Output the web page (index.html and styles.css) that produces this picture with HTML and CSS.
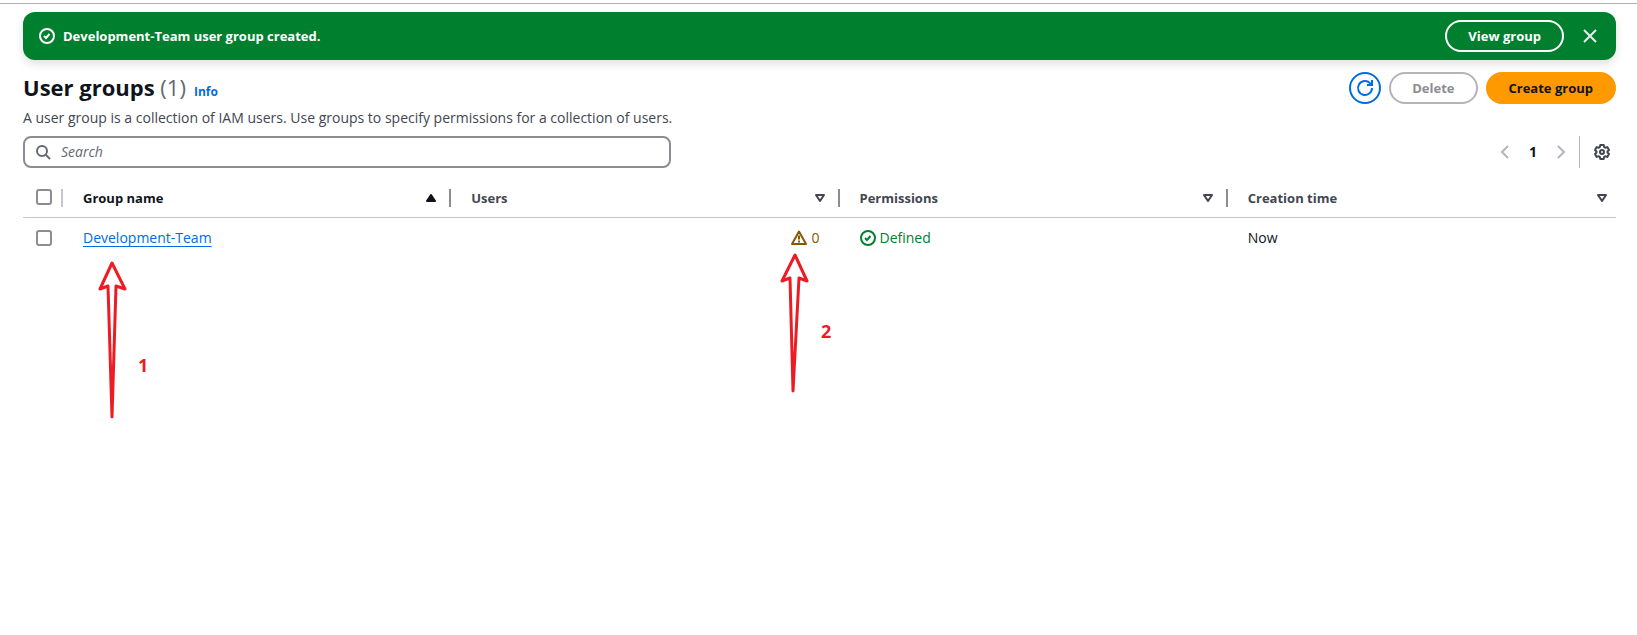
FILE: index.html
```html
<!DOCTYPE html>
<html lang="en">
<head>
<meta charset="utf-8">
<title>User groups</title>
<link rel="stylesheet" href="styles.css">
</head>
<body>
<main class="page">
  <div class="flash" role="status">
    <svg class="icon" viewBox="0 0 16 16"><circle cx="8" cy="8" r="7"/><path d="m5 8 2 2 3.5-4"/></svg>
    <p class="flash-text">Development-Team user group created.</p>
    <button class="btn btn-flash" type="button">View group</button>
    <button class="icon-btn" type="button" aria-label="Dismiss"><svg class="icon" viewBox="0 0 16 16"><path d="m2 2 12 12M14 2 2 14"/></svg></button>
  </div>

  <header class="header">
    <div class="heading">
      <h1 class="title">User groups <span class="count">(1)</span></h1>
      <a class="info" href="#info">Info</a>
    </div>
    <div class="actions">
      <button class="btn btn-refresh" type="button" aria-label="Refresh"><svg class="icon" viewBox="0 0 16 16"><path d="M15 8a7 7 0 1 1-2-4.900L15 5M10 5h5V0"/></svg></button>
      <button class="btn btn-disabled" type="button" disabled>Delete</button>
      <button class="btn btn-primary" type="button">Create group</button>
    </div>
  </header>
  <p class="description">A user group is a collection of IAM users. Use groups to specify permissions for a collection of users.</p>

  <div class="tools">
    <label class="search">
      <svg class="icon" viewBox="0 0 16 16"><circle cx="7" cy="7" r="5"/><path d="m15 15-4.500-4.500"/></svg>
      <input class="search-input" type="search" placeholder="Search" aria-label="Search">
    </label>
    <div class="tools-end">
      <nav class="pages" aria-label="Pagination">
        <button class="icon-btn arrow" type="button" aria-label="Previous page" disabled><svg class="icon" viewBox="0 0 16 16"><path d="M11 2 5 8l6 6"/></svg></button>
        <button class="icon-btn page-no" type="button">1</button>
        <button class="icon-btn arrow" type="button" aria-label="Next page" disabled><svg class="icon" viewBox="0 0 16 16"><path d="m5 2 6 6-6 6"/></svg></button>
      </nav>
      <div class="prefs">
        <button class="icon-btn" type="button" aria-label="Preferences"><svg class="icon" viewBox="0 0 16 16"><path stroke-linejoin="round" d="M6.300 1h3.400l.5 2.100 1 .6 2.100-.6L15 6l-1.500 1.500v1L15 10l-1.700 2.900-2.100-.6-1 .6-.5 2.100H6.300l-.5-2.100-1-.6-2.100.6L1 10l1.500-1.500v-1L1 6l1.700-2.900 2.100.6 1-.6z"/><circle cx="8" cy="8" r="2"/></svg></button>
      </div>
    </div>
  </div>

  <table class="table">
    <colgroup><col class="col-check"><col><col><col><col></colgroup>
    <thead>
      <tr>
        <th scope="col"><div class="check-head"><input class="check" type="checkbox" aria-label="Select all groups"></div></th>
        <th scope="col"><div class="head sorted">Group name<svg class="sort" viewBox="0 0 10 8"><path class="solid" d="M5 1 9 7H1z"/></svg></div></th>
        <th scope="col"><div class="head">Users<svg class="sort" viewBox="0 0 10 8"><path d="M1 1h8L5 7z"/></svg></div></th>
        <th scope="col"><div class="head">Permissions<svg class="sort" viewBox="0 0 10 8"><path d="M1 1h8L5 7z"/></svg></div></th>
        <th scope="col"><div class="head last">Creation time<svg class="sort" viewBox="0 0 10 8"><path d="M1 1h8L5 7z"/></svg></div></th>
      </tr>
    </thead>
    <tbody>
      <tr>
        <td class="cell-check"><input class="check" type="checkbox" aria-label="Select Development-Team"></td>
        <td><a class="link" href="#group">Development-Team</a></td>
        <td><span class="status warning"><svg class="icon" viewBox="0 0 16 16"><path stroke-linejoin="round" d="M8 1.500 15 14H1z"/><path d="M8 5.500v4M8 10.500v2"/></svg>0</span></td>
        <td><span class="status success"><svg class="icon" viewBox="0 0 16 16"><circle cx="8" cy="8" r="7"/><path d="m5 8 2 2 3.500-4"/></svg>Defined</span></td>
        <td>Now</td>
      </tr>
    </tbody>
  </table>
</main>

<div class="note note-one">
  <svg class="note-arrow" width="30" height="160" viewBox="0 0 30 160"><path d="m15 4 13 26-9-3-4 131-4-131-8 3z"/></svg>
  <span>1</span>
</div>
<div class="note note-two">
  <svg class="note-arrow" width="30" height="142" viewBox="0 0 30 142"><path d="m15 4 12 26-8-3-6 113-3-113-8 3z"/></svg>
  <span>2</span>
</div>
</body>
</html>
```
FILE: styles.css
```css
* { box-sizing: border-box; }

body {
  position: relative;
  min-height: 100vh;
  margin: 0;
  padding-top: 3px;
  background: #fff;
  color: #0f141a;
  font: 14px/20px "Open Sans", "Noto Sans", sans-serif;
}

h1, p { margin: 0; }
button, input { font: inherit; }

.page {
  padding: 8px 21px 0 23px;
  border-top: 1px solid #b0b0b0;
}

.icon {
  display: block;
  flex: none;
  width: 16px;
  height: 16px;
  overflow: visible;
  fill: none;
  stroke: currentColor;
  stroke-width: 2;
}

.flash {
  display: flex;
  align-items: center;
  height: 48px;
  padding: 0 16px;
  border-radius: 12px;
  background: #00802f;
  box-shadow: 0 4px 8px rgba(0, 7, 22, 0.12);
  color: #fff;
}

.flash-text {
  flex: 1;
  padding-left: 8px;
  font-size: 13px;
  font-weight: 700;
}

.btn {
  height: 32px;
  padding: 0 21px;
  border: 2px solid;
  border-radius: 16px;
  background: none;
  font-size: 13px;
  font-weight: 700;
  line-height: 20px;
  white-space: nowrap;
}

.btn-flash { margin-right: 16px; color: #fff; }

.icon-btn {
  padding: 0;
  border: 0;
  background: none;
  color: inherit;
}

.flash .icon-btn { padding: 2px; color: #ebebf0; }

.header {
  display: flex;
  justify-content: space-between;
  margin-top: 12px;
}

.heading {
  display: flex;
  align-items: baseline;
  gap: 8px;
}

.title {
  font-size: 22px;
  font-weight: 700;
  line-height: 30px;
}

.count { color: #656871; font-weight: 400; }

.info {
  color: #006ce0;
  font-size: 12px;
  font-weight: 700;
  text-decoration: none;
}

.actions { display: flex; gap: 8px; }
.btn-refresh { width: 32px; padding: 0 6px; color: #006ce0; }
.btn-disabled { border-color: #b4b4bb; color: #8c8c94; }
.btn-primary { border-color: #ff9900; background: #ff9900; color: #0f141a; }

.description {
  margin-top: 4px;
  color: #424650;
}

.tools {
  display: flex;
  align-items: center;
  justify-content: space-between;
  margin-top: 8px;
}

.search {
  display: flex;
  align-items: center;
  gap: 10px;
  width: 648px;
  height: 32px;
  padding: 0 10px;
  border: 2px solid #8c8c94;
  border-radius: 8px;
  color: #656871;
}

.search-input {
  flex: 1;
  min-width: 0;
  padding: 0;
  border: 0;
  outline: 0;
  background: none;
}

.search-input::placeholder { color: #656871; font-style: italic; opacity: 1; }

.tools-end { display: flex; align-items: center; gap: 10px; }
.pages { display: flex; align-items: center; gap: 8px; }
.arrow { color: #b4b4bb; }
.page-no { width: 24px; font-weight: 700; }

.prefs {
  display: flex;
  align-items: center;
  height: 32px;
  padding: 0 6px 0 14px;
  border-left: 1px solid #b4b4bb;
  color: #424650;
}

.table {
  width: 100%;
  margin-top: 8px;
  border-collapse: collapse;
  table-layout: fixed;
}

.col-check { width: 40px; }

th {
  height: 41px;
  padding: 4px 0 0;
  border-bottom: 1px solid #c6c6cd;
  font-size: 13px;
  text-align: left;
}

td { height: 42px; padding: 0 20px; }

.check-head {
  display: flex;
  align-items: flex-start;
  height: 18px;
  padding-left: 13px;
  border-right: 2px solid #c6c6cd;
}

.head {
  display: flex;
  align-items: center;
  justify-content: space-between;
  height: 18px;
  padding: 0 13px 0 20px;
  border-right: 2px solid #8c8c94;
  color: #424650;
}

.sorted { color: #0f141a; }
.last { padding-right: 9px; border: 0; }

.sort {
  width: 10px;
  height: 8px;
  fill: none;
  stroke: currentColor;
  stroke-linejoin: round;
  stroke-width: 2;
}

.solid { fill: currentColor; }

.check {
  display: block;
  width: 16px;
  height: 16px;
  margin: 0;
  border: 2px solid #8c8c94;
  border-radius: 3px;
  appearance: none;
}

.cell-check { padding: 0 0 0 13px; }

.link {
  color: #006ce0;
  text-decoration: underline;
  text-decoration-thickness: 1px;
  text-underline-offset: 3px;
}

.status { display: flex; align-items: center; gap: 4px; }
.warning { justify-content: flex-end; color: #855900; }
.success { color: #00802f; }

.note {
  position: absolute;
  display: flex;
  color: #ed1c24;
  font-size: 18px;
  font-weight: 700;
}

.note-one { top: 259px; left: 97px; gap: 11px; }
.note-one span { padding-top: 96px; }
.note-two { top: 251px; left: 780px; gap: 11px; }
.note-two span { padding-top: 70px; }

.note-arrow {
  fill: #fff;
  stroke: currentColor;
  stroke-linejoin: round;
  stroke-width: 3;
}
```
